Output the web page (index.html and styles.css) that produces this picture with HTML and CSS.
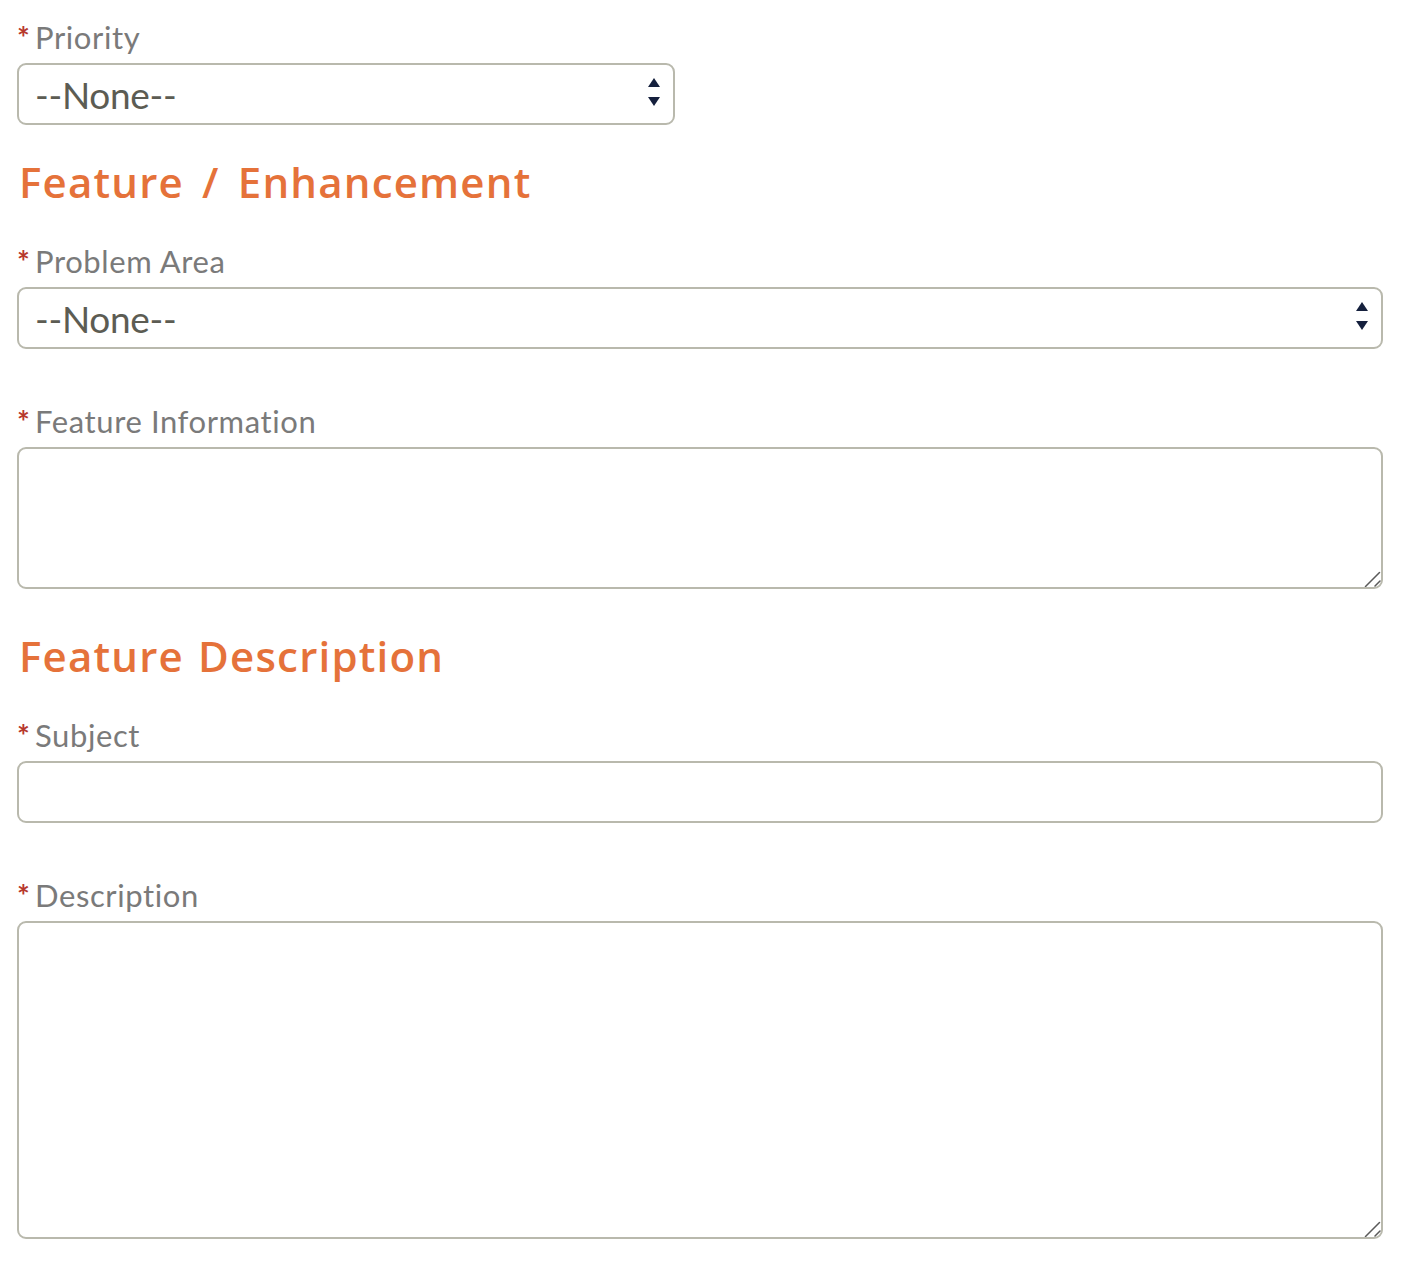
FILE: index.html
```html
<!DOCTYPE html>
<html lang="en">
<head>
<meta charset="utf-8">
<title>Feature Request</title>
<link rel="stylesheet" href="styles.css">
</head>
<body>
<form class="form">
  <div class="field field--first">
    <label class="label"><span class="req">*</span>Priority</label>
    <div class="select-wrap select-wrap--half">
      <select class="select"><option>--None--</option></select>
      <svg class="arrows" width="12" height="28" viewBox="0 0 12 28"><path d="M6 0 L12 9 L0 9 Z" fill="#15203d"/><path d="M0 19 L12 19 L6 28 Z" fill="#15203d"/></svg>
    </div>
  </div>

  <h2 class="heading heading--after-select">Feature <span class="slash">/</span> Enhancement</h2>

  <div class="field field--after-heading">
    <label class="label"><span class="req">*</span>Problem Area</label>
    <div class="select-wrap">
      <select class="select"><option>--None--</option></select>
      <svg class="arrows" width="12" height="28" viewBox="0 0 12 28"><path d="M6 0 L12 9 L0 9 Z" fill="#15203d"/><path d="M0 19 L12 19 L6 28 Z" fill="#15203d"/></svg>
    </div>
  </div>

  <div class="field">
    <label class="label"><span class="req">*</span>Feature Information</label>
    <div class="textarea-wrap">
      <textarea class="textarea textarea--short"></textarea>
      <svg class="grip" width="18" height="18" viewBox="0 0 18 18"><path d="M16.5 3.5 L2.5 17.5 M17 12 L12 17" stroke="#5a5a5a" stroke-width="1.5" stroke-linecap="round" fill="none"/></svg>
    </div>
  </div>

  <h2 class="heading heading--after-textarea">Feature Description</h2>

  <div class="field field--after-heading">
    <label class="label"><span class="req">*</span>Subject</label>
    <input class="input" type="text">
  </div>

  <div class="field">
    <label class="label"><span class="req">*</span>Description</label>
    <div class="textarea-wrap">
      <textarea class="textarea textarea--tall"></textarea>
      <svg class="grip" width="18" height="18" viewBox="0 0 18 18"><path d="M16.5 3.5 L2.5 17.5 M17 12 L12 17" stroke="#5a5a5a" stroke-width="1.5" stroke-linecap="round" fill="none"/></svg>
    </div>
  </div>
</form>
</body>
</html>
```

FILE: styles.css
```css
html, body {
  margin: 0;
  padding: 0;
  background: #ffffff;
}

.form {
  padding: 19px 31px 0 17px;
  font-family: Lato, "Liberation Sans", sans-serif;
}

.field {
  display: flex;
  flex-direction: column;
  margin-top: 54px;
}

.field--first {
  margin-top: 0;
}

.field--after-heading {
  margin-top: 36px;
}

.label {
  display: block;
  font-size: 31px;
  line-height: 37px;
  letter-spacing: 0.6px;
  color: #7a7a7a;
  margin-bottom: 7px;
}

.req {
  display: inline-block;
  width: 18px;
  color: #b7392c;
  font-weight: 700;
  font-size: 30px;
  letter-spacing: 0;
}

.select-wrap {
  position: relative;
  width: 100%;
}

.select-wrap--half {
  width: 658px;
}

.select {
  display: block;
  width: 100%;
  height: 62px;
  box-sizing: border-box;
  border: 2px solid #b9b9ad;
  border-radius: 9px;
  background: #ffffff;
  padding: 0 40px 0 16px;
  margin: 0;
  font-family: Lato, "Liberation Sans", sans-serif;
  font-size: 37px;
  letter-spacing: -0.3px;
  color: #5c5c53;
  appearance: none;
  -webkit-appearance: none;
  outline: none;
}

.arrows {
  position: absolute;
  right: 15px;
  top: 15px;
  pointer-events: none;
}

.input {
  display: block;
  width: 100%;
  height: 62px;
  box-sizing: border-box;
  border: 2px solid #b9b9ad;
  border-radius: 9px;
  background: #ffffff;
  padding: 0 16px;
  margin: 0;
  font-family: Lato, "Liberation Sans", sans-serif;
  font-size: 30px;
  outline: none;
}

.textarea-wrap {
  position: relative;
}

.textarea {
  display: block;
  width: 100%;
  box-sizing: border-box;
  border: 2px solid #b9b9ad;
  border-radius: 9px;
  background: #ffffff;
  padding: 10px 16px;
  margin: 0;
  font-family: Lato, "Liberation Sans", sans-serif;
  font-size: 30px;
  outline: none;
  resize: none;
}

.grip {
  position: absolute;
  right: 2px;
  bottom: 2px;
  pointer-events: none;
}

.textarea--short {
  height: 142px;
}

.textarea--tall {
  height: 318px;
}

.heading {
  margin: 0;
  font-family: "Open Sans", "DejaVu Sans", sans-serif;
  font-weight: 600;
  font-size: 42px;
  line-height: 50px;
  letter-spacing: 1.2px;
  word-spacing: 2px;
  color: #e5723a;
  padding-left: 2px;
}

.slash {
  padding: 0 4px;
}

.heading--after-select {
  margin-top: 32px;
}

.heading--after-textarea {
  margin-top: 42px;
}
```
